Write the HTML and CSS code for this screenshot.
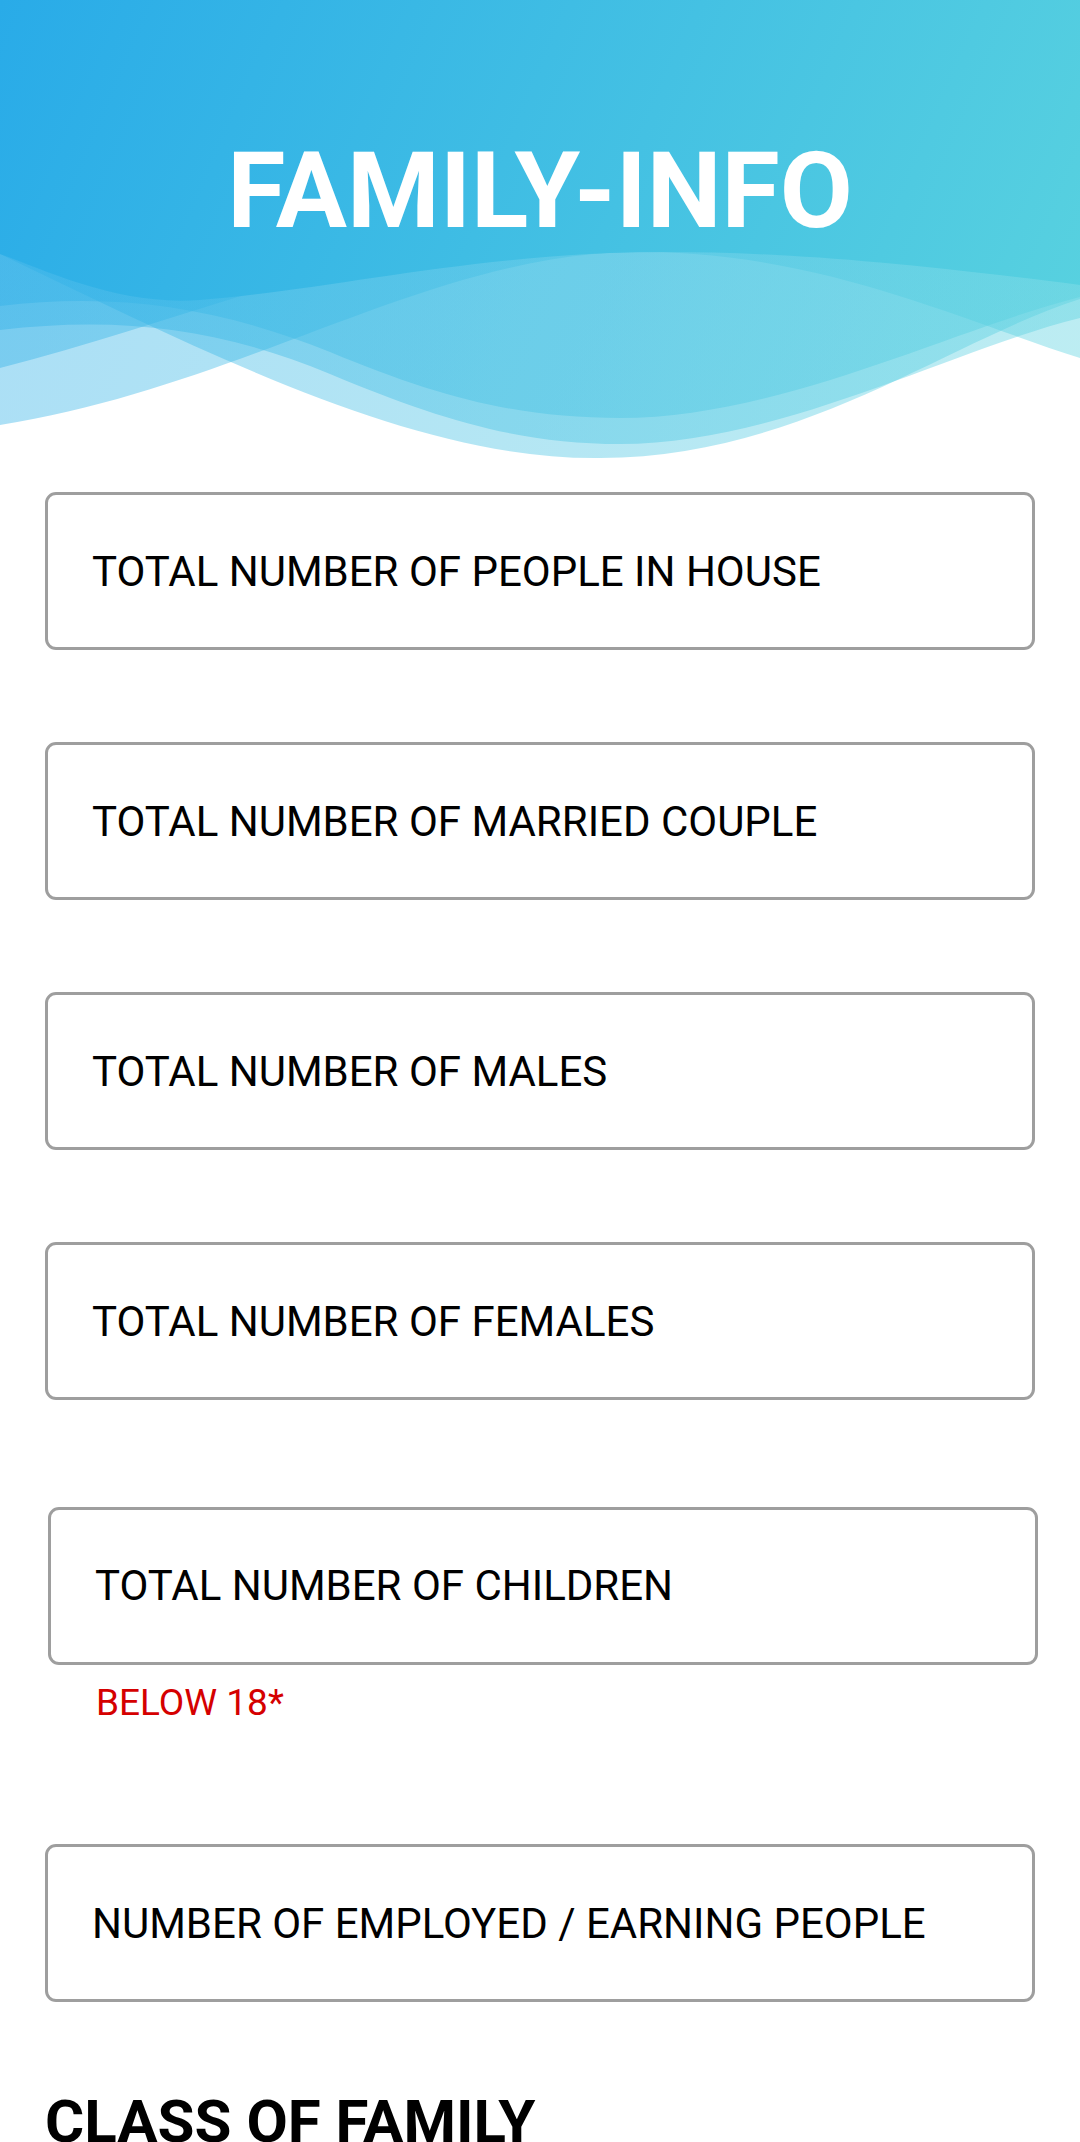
FILE: index.html
```html
<!DOCTYPE html>
<html lang="en">
<head>
<meta charset="utf-8">
<title>Family Info</title>
<link rel="stylesheet" href="styles.css">
</head>
<body>
<header class="header">
  <svg class="waves" width="1080" height="460" viewBox="0 0 1080 460" xmlns="http://www.w3.org/2000/svg" aria-hidden="true">
    <defs>
      <linearGradient id="g" gradientUnits="userSpaceOnUse" x1="0" y1="0" x2="1080" y2="460">
        <stop offset="0" stop-color="#29abe8"/>
        <stop offset="1" stop-color="#5ad3df"/>
      </linearGradient>
    </defs>
    <path fill="url(#g)" d="M0,0 H1080 V285 C900,262 780,252 664,252 C480,252 330,290 200,300 C120,306 50,272 0,254 Z"/>
    <path fill="url(#g)" fill-opacity="0.4" d="M0,0 H1080 V230 C900,200 700,190 450,240 C300,270 150,330 0,368 Z"/>
    <path fill="url(#g)" fill-opacity="0.4" d="M0,0 H1080 V297 C950,330 780,418 620,418 C520,418 440,398 330,352 C220,308 120,292 0,306 Z"/>
    <path fill="url(#g)" fill-opacity="0.4" d="M0,0 H1080 V318 C950,350 780,444 620,444 C520,444 440,420 330,374 C220,328 120,316 0,330 Z"/>
    <path fill="url(#g)" fill-opacity="0.4" d="M0,0 H1080 V299 C950,340 800,458 600,458 C420,460 220,360 0,254 Z"/>
    <path fill="url(#g)" fill-opacity="0.4" d="M0,0 H1080 V358 C960,320 820,252 640,252 C430,252 250,385 0,425 Z"/>
  </svg>
  <h1 class="title">FAMILY-INFO</h1>
</header>
<main class="form">
  <div class="field"><span>TOTAL NUMBER OF PEOPLE IN HOUSE</span></div>
  <div class="field field-next"><span>TOTAL NUMBER OF MARRIED COUPLE</span></div>
  <div class="field field-next"><span>TOTAL NUMBER OF MALES</span></div>
  <div class="field field-next"><span>TOTAL NUMBER OF FEMALES</span></div>
  <div class="field field-children"><span>TOTAL NUMBER OF CHILDREN</span></div>
  <p class="hint">BELOW 18*</p>
  <div class="field field-earning"><span>NUMBER OF EMPLOYED / EARNING PEOPLE</span></div>
  <h2 class="section-title">CLASS OF FAMILY</h2>
</main>
</body>
</html>
```

FILE: styles.css
```css
html, body {
  margin: 0;
  padding: 0;
  background: #ffffff;
}

body {
  width: 1080px;
  height: 2142px;
  overflow: hidden;
  font-family: Roboto, "Noto Sans", "Liberation Sans", sans-serif;
  color: #000000;
}

.header {
  position: relative;
  height: 460px;
}

.waves {
  position: absolute;
  left: 0;
  top: 0;
  display: block;
}

.title {
  position: relative;
  margin: 0;
  padding-top: 138px;
  text-align: center;
  font-family: Roboto, "Liberation Sans", sans-serif;
  font-weight: 700;
  font-size: 106px;
  line-height: 1;
  color: #ffffff;
}

.form {
  display: flex;
  flex-direction: column;
  padding: 32px 45px 0 45px;
}

.field {
  box-sizing: border-box;
  height: 158px;
  border: 3px solid #9e9e9e;
  border-radius: 11px;
  display: flex;
  align-items: center;
  padding-left: 44px;
  font-size: 42px;
  font-weight: 400;
  color: #000000;
}

.field-next {
  margin-top: 92px;
}

.field-children {
  margin-top: 106.5px;
  margin-left: 3px;
  margin-right: -3px;
}

.hint {
  margin: 16.5px 0 0 0;
  padding-left: 51px;
  font-size: 37px;
  line-height: normal;
  color: #d50000;
}

.field-earning {
  margin-top: 120px;
}

.section-title {
  margin: 84px 0 0 0;
  font-size: 60px;
  font-weight: 700;
  line-height: normal;
  color: #000000;
}
```
